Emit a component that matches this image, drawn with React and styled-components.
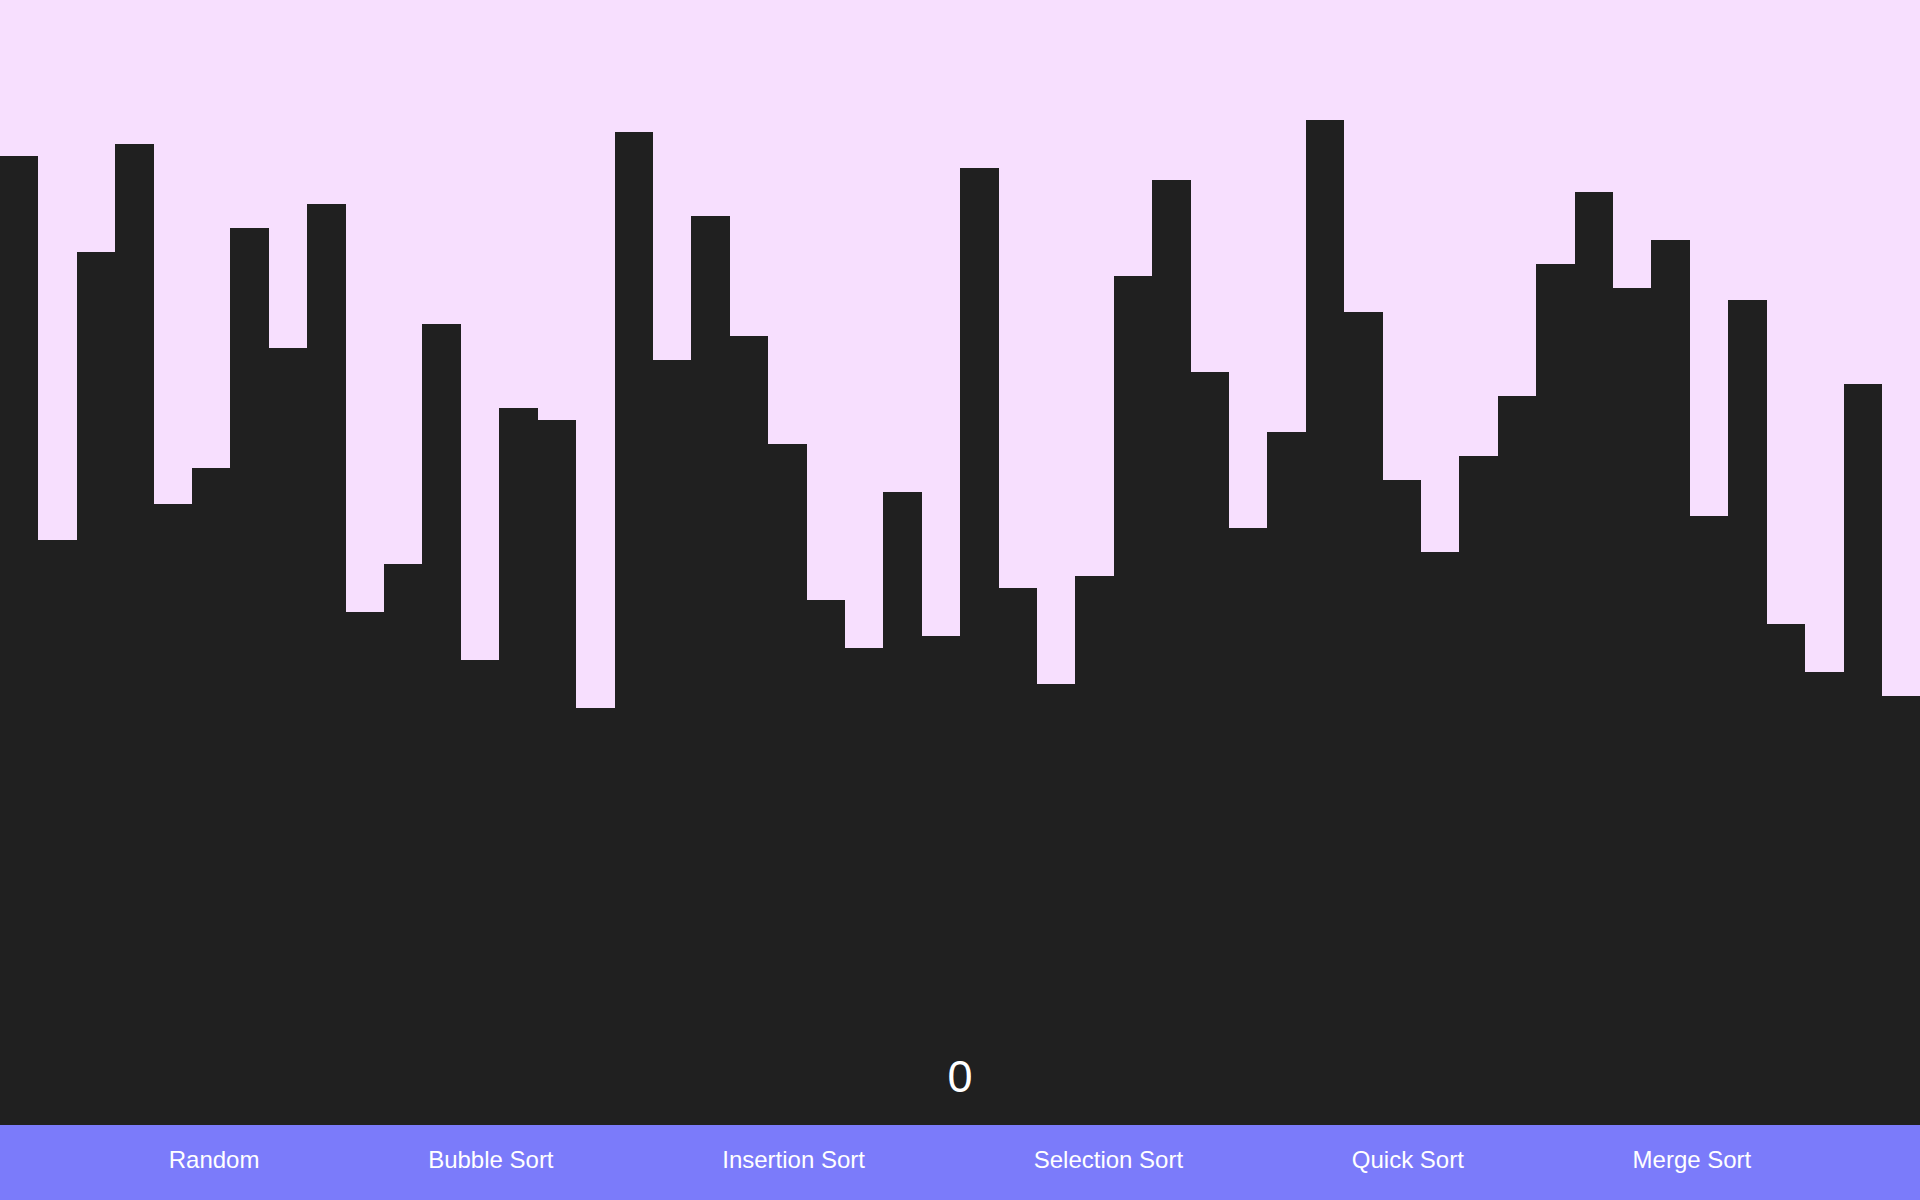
import React from "react";
import styled, { createGlobalStyle } from "styled-components";

const GlobalStyle = createGlobalStyle`
  html, body { margin: 0; padding: 0; height: 100%; }
  body { font-family: "Liberation Sans", Arial, sans-serif; background: #f7dffe; }
  #root { height: 100%; }
`;

const ranks = [
  3, 35, 11, 2, 32, 29, 9, 19, 7, 41, 37, 17, 45, 24, 25, 49, 1, 20, 8, 18,
  27, 40, 44, 31, 43, 4, 39, 47, 38, 13, 5, 21, 34, 26, 0, 16, 30, 36, 28, 23,
  12, 6, 14, 10, 33, 15, 42, 46, 22, 48,
];
const values = ranks.map((k) => 50 - k);

const Page = styled.div`
  display: flex;
  flex-direction: column;
  width: 100vw;
  height: 100vh;
  overflow: hidden;
`;

const Chart = styled.div`
  position: relative;
  flex: 1;
  display: flex;
  align-items: flex-end;
  background: #f7dffe;
`;

const Bar = styled.div`
  flex: 1;
  background: #202020;
`;

const Counter = styled.div`
  position: absolute;
  left: 0;
  right: 0;
  bottom: 22px;
  text-align: center;
  color: #ffffff;
  font-size: 45px;
  line-height: normal;
`;

const Nav = styled.nav`
  box-sizing: border-box;
  height: 75px;
  padding-bottom: 5px;
  flex: none;
  display: flex;
  align-items: center;
  justify-content: space-evenly;
  background: #7b7bfa;
`;

const NavButton = styled.button`
  background: none;
  border: none;
  padding: 0;
  margin: 0;
  color: #ffffff;
  font-family: "Liberation Sans", Arial, sans-serif;
  font-size: 24px;
  line-height: normal;
  cursor: pointer;
`;

const labels = [
  "Random",
  "Bubble Sort",
  "Insertion Sort",
  "Selection Sort",
  "Quick Sort",
  "Merge Sort",
];

export default function App() {
  return (
    <>
      <GlobalStyle />
      <Page>
        <Chart>
          {values.map((v, i) => (
            <Bar key={i} style={{ height: `${405 + 12 * v}px` }} />
          ))}
          <Counter>0</Counter>
        </Chart>
        <Nav>
          {labels.map((l) => (
            <NavButton key={l}>{l}</NavButton>
          ))}
        </Nav>
      </Page>
    </>
  );
}
